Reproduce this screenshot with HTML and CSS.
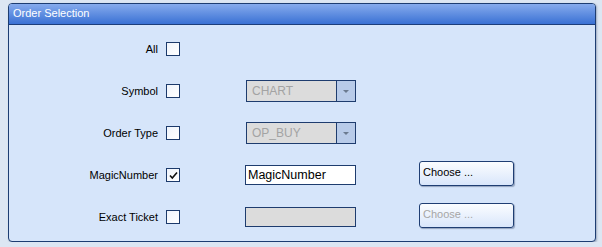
FILE: index.html
```html
<!DOCTYPE html>
<html lang="en">
<head>
    <meta charset="UTF-8">
    <title>Order Selection</title>
    <link rel="stylesheet" href="styles.css">
</head>
<body>
    <div class="panel">
        <div class="panel-header">Order Selection</div>
        <div class="panel-body">
            <div class="row">
                <span class="label">All</span>
                <span class="check"></span>
            </div>
            <div class="row">
                <span class="label">Symbol</span>
                <span class="check"></span>
                <div class="combo">
                    <span class="combo-text">CHART</span>
                    <span class="combo-btn"><span class="arrow"></span></span>
                </div>
            </div>
            <div class="row">
                <span class="label">Order Type</span>
                <span class="check"></span>
                <div class="combo">
                    <span class="combo-text">OP_BUY</span>
                    <span class="combo-btn"><span class="arrow"></span></span>
                </div>
            </div>
            <div class="row">
                <span class="label">MagicNumber</span>
                <span class="check checked">
                    <svg width="11" height="11" viewBox="0 0 11 11"><path d="M2 5.5 L4.3 8 L9 2.5" fill="none" stroke="#111" stroke-width="1.6"/></svg>
                </span>
                <div class="textbox">MagicNumber</div>
                <button class="btn">Choose ...</button>
            </div>
            <div class="row">
                <span class="label">Exact Ticket</span>
                <span class="check"></span>
                <div class="textbox disabled"></div>
                <button class="btn disabled">Choose ...</button>
            </div>
        </div>
    </div>
</body>
</html>
```

FILE: styles.css
```css
body {
    margin: 0;
    padding: 3px 6px 0 8px;
    background-color: #dce6f3;
    font-family: "Liberation Sans", Arial, sans-serif;
    font-size: 11px;
}
.panel {
    width: 586px;
    height: 237px;
    border: 1px solid #1d3d72;
    border-radius: 4px;
    background-color: #d6e5fa;
    box-shadow: 1px 1px 2px rgba(40, 60, 100, 0.35);
    overflow: hidden;
}
.panel-header {
    height: 20px;
    line-height: 19px;
    padding-left: 4px;
    color: #fff;
    font-size: 11px;
    background: linear-gradient(#86abed, #3a71d4);
    border-bottom: 1px solid #1c3d7a;
}
.panel-body {
    padding-top: 3px;
}
.row {
    display: flex;
    align-items: center;
    height: 42px;
}
.label {
    width: 149px;
    text-align: right;
    color: #000;
}
.check {
    width: 12px;
    height: 12px;
    margin-left: 8px;
    border: 1px solid #1c3a6b;
    background: linear-gradient(135deg, #f0f4fb, #ffffff);
    display: flex;
    align-items: center;
    justify-content: center;
}
.combo {
    display: flex;
    width: 108px;
    height: 20px;
    margin-left: 66px;
    border: 1px solid #1e3c6e;
    background-color: #dcdcdc;
}
.combo-text {
    flex: 1;
    padding-left: 5px;
    line-height: 20px;
    font-size: 12px;
    color: #a3a3a3;
}
.combo-btn {
    width: 18px;
    border-left: 1px solid #1e3c6e;
    background-color: #b8cbe9;
    display: flex;
    align-items: center;
    justify-content: center;
}
.arrow {
    width: 0;
    height: 0;
    border-left: 3px solid transparent;
    border-right: 3px solid transparent;
    border-top: 3px solid #6a7a90;
}
.textbox {
    width: 107px;
    height: 18px;
    margin-left: 65px;
    padding-left: 2px;
    border: 1px solid #1e3c6e;
    background-color: #fff;
    font-size: 12.5px;
    line-height: 19px;
}
.textbox.disabled {
    background-color: #dcdcdc;
}
.btn {
    width: 95px;
    height: 25px;
    margin-left: 63px;
    margin-bottom: 4px;
    padding: 0 0 2px 3px;
    text-align: left;
    font-family: "Liberation Sans", Arial, sans-serif;
    font-size: 11px;
    color: #000;
    border: 1px solid #1f3e73;
    border-radius: 3px;
    background: linear-gradient(#fbfdff, #d9e6fb);
    box-shadow: 1px 1px 1px rgba(20, 40, 80, 0.35);
}
.btn.disabled {
    color: #a6a6a6;
}
```
